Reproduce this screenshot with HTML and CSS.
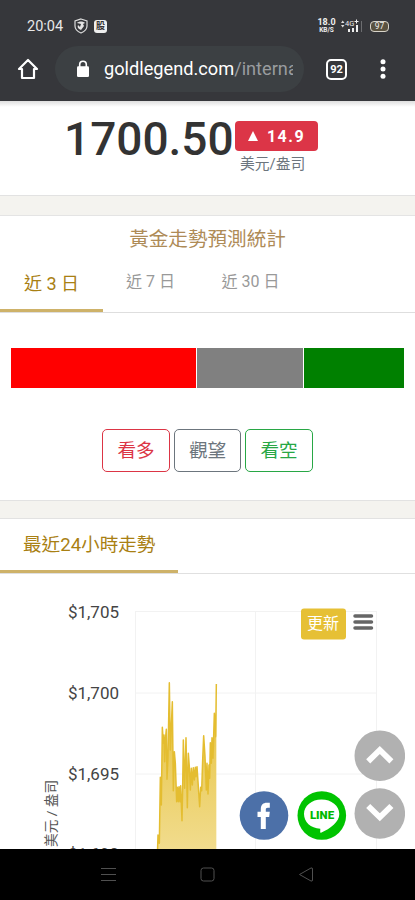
FILE: index.html
```html
<!DOCTYPE html>
<html lang="zh-Hant">
<head>
<meta charset="utf-8">
<meta name="viewport" content="width=device-width">
<title>黃金走勢</title>
<link rel="stylesheet" href="styles.css">
</head>
<body>
<div class="phone">
  <header class="browser">
    <div class="status">
      <span class="clock">20:04</span>
      <svg class="shield" width="14" height="16" viewBox="0 0 14 16"><path d="M7 1 13 3v5c0 3-2.500 5.500-6 7C3.500 13.500 1 11 1 8V3Z" fill="none" stroke="#ddd" stroke-width="1.200"/><path d="M3 5c2-2 6-2 8 0L9 6l1 2-3 4C4 11 3 9 4 7l2 2 1-3Z" fill="#e4e4e4"/></svg>
      <span class="stock">股</span>
      <span class="speed"><b>18.0</b><small>KB/S</small></span>
      <svg class="signal" width="24" height="16" viewBox="0 0 24 16"><path d="m1 5 1.700-2.500L4.500 5ZM1 7l1.700 2.500L4.500 7Z" fill="#ddd"/><text x="5" y="8">4G</text><path d="M14.500 3.500h4M16.500 1.500v4" stroke="#eee"/><path d="M8 11h2v3H8Zm4-1h2v4h-2Zm4-3h2v7h-2Z" fill="#eee"/><path d="M21.500 3v11" stroke="#6c6d70"/></svg>
      <span class="battery">97</span>
    </div>
    <div class="toolbar">
      <svg class="home" width="22" height="22" viewBox="0 0 22 22"><path d="M11 2 2 11h3v9h12v-9h3Z" fill="none" stroke="#fff" stroke-width="2.200" stroke-linejoin="round"/></svg>
      <div class="address">
        <svg width="14" height="18" viewBox="0 0 14 18"><path d="M3.700 7V4.500a3.300 3.300 0 0 1 6.600 0V7" fill="none" stroke="#fff" stroke-width="1.600"/><rect x="1" y="6.300" width="12" height="10.700" rx="1.300" fill="#fff"/></svg>
        <span class="url">goldlegend.com<i>/interna</i></span>
      </div>
      <span class="count">92</span>
      <svg class="more" width="6" height="20" viewBox="0 0 6 20" fill="#fff"><circle cx="3" cy="2.800" r="2.500"/><circle cx="3" cy="10" r="2.500"/><circle cx="3" cy="17.200" r="2.500"/></svg>
    </div>
  </header>

  <main class="page">
    <section class="card quote">
      <span class="price">1700.50</span>
      <div class="delta">
        <span class="badge"><svg width="10" height="10" viewBox="0 0 10 10"><path d="m5 0 5 10H0Z" fill="#fff"/></svg>14.9</span>
        <span class="unit">美元/盎司</span>
      </div>
    </section>

    <section class="card forecast">
      <h2>黃金走勢預測統計</h2>
      <nav class="tabs"><a class="tab active">近 3 日</a><a class="tab">近 7 日</a><a class="tab">近 30 日</a></nav>
      <div class="ratio"><span class="bull"></span><span class="hold"></span><span class="bear"></span></div>
      <div class="votes"><button class="red">看多</button><button class="gray">觀望</button><button class="green">看空</button></div>
    </section>

    <section class="card trend">
      <div class="trend-head"><span>最近24小時走勢</span></div>
      <svg class="chart" width="415" height="275" viewBox="0 574 415 275">
        <defs><linearGradient id="gold" gradientUnits="userSpaceOnUse" x1="0" y1="40" x2="0" y2="720"><stop offset="0" stop-color="#e6c035"/><stop offset="1" stop-color="#f5e6ae"/></linearGradient></defs>
        <path d="M135 611.500h241M135 693h241M135 774h241M135.500 611v238M255.500 611v238M376.500 611v238" stroke="#f2f2f2" fill="none"/>
        <g transform="translate(130 670) scale(.33333)">
          <path fill="url(#gold)" stroke="none" d="M82 560 84 495 88 520 91 322 94 405 97 172 100 220 102 195 104 275 106 210 109 178 111 328 114 260 118 38 121 240 127 95 130 362 133 245 136 280 140 395 142 352 145 395 147 350 150 395 152 347 156 452 158 350 160 210 164 355 168 203 172 413 175 250 178 290 181 360 184 295 187 345 190 293 193 330 196 292 198 320 201 290 205 350 209 410 212 352 215 362 218 270 221 197 225 260 229 360 231 280 234 372 237 285 239 325 241 218 244 280 246 203 249 265 253 130 257 200 259 42V560Z"/>
          <path fill="none" stroke="#e4bd30" stroke-width="4.500" stroke-linejoin="round" d="M82 560 84 495 88 520 91 322 94 405 97 172 100 220 102 195 104 275 106 210 109 178 111 328 114 260 118 38 121 240 127 95 130 362 133 245 136 280 140 395 142 352 145 395 147 350 150 395 152 347 156 452 158 350 160 210 164 355 168 203 172 413 175 250 178 290 181 360 184 295 187 345 190 293 193 330 196 292 198 320 201 290 205 350 209 410 212 352 215 362 218 270 221 197 225 260 229 360 231 280 234 372 237 285 239 325 241 218 244 280 246 203 249 265 253 130 257 200 259 42"/>
        </g>
        <g class="axis"><text x="119" y="617.500">$1,705</text><text x="119" y="698.500">$1,700</text><text x="119" y="779.500">$1,695</text><text x="119" y="859.500">$1,690</text></g>
        <text class="axis-title" transform="translate(56 847) rotate(-90)">美元 / 盎司</text>
        <rect x="301" y="608.500" width="45" height="31" rx="3" fill="#e6c035"/>
        <text class="refresh" x="323" y="628.500">更新</text>
        <path d="M355 616h16.500M355 622h16.500M355 628h16.500" stroke="#666" stroke-width="3.500" stroke-linecap="round"/>
      </svg>
    </section>

    <div class="floating">
      <svg width="166" height="112" viewBox="239 729 166 112">
        <circle cx="264" cy="815.500" r="24.300" fill="#4c70a8"/>
        <path d="M260.800 829v-12H257.500v-5.200h3.300v-2.500c0-4.500 2.500-6.500 6-6.500h3v5h-2c-1.500 0-2 .7-2 1.800v2.200h4l-.6 5.200h-3.400v12Z" fill="#fff"/>
        <circle cx="321.800" cy="815.500" r="24.300" fill="#00c300"/>
        <path d="M321.500 799.500c10 0 17.800 6.300 17.800 14.500 0 8-8.800 14.500-18.300 18.800-1.300.5-.6-2.200-.7-4-9.800-.5-16.300-7-16.300-14.800 0-8.200 7.700-14.500 17.500-14.500Z" fill="#fff"/>
        <text class="line" x="322" y="818.500">LINE</text>
        <circle cx="379.800" cy="755.700" r="25.300" fill="#b1b1b1"/>
        <path d="m368.200 761.300 11.600-11.300 11.600 11.300" fill="none" stroke="#fff" stroke-width="5.800"/>
        <circle cx="379.800" cy="813.500" r="25.300" fill="#b1b1b1"/>
        <path d="m368.200 806 11.600 11.300 11.600-11.300" fill="none" stroke="#fff" stroke-width="5.800"/>
      </svg>
    </div>
  </main>

  <footer class="system">
    <svg width="415" height="51" viewBox="0 849 415 51" fill="none" stroke="#505050"><path d="M101 868.500h15M101 874.500h15M101 880.500h15"/><rect x="201" y="868" width="13" height="13" rx="2.500"/><path d="M299.500 874.500 311 868q1.500-.5 1.500 1v11q0 1.500-1.500 1Z"/></svg>
  </footer>
</div>
</body>
</html>
```

FILE: styles.css
```css
* { box-sizing: border-box; }
body { margin: 0; background: #000; font-family: Roboto, "Noto Sans CJK TC", sans-serif; }
svg { display: block; flex: none; }
.phone { width: 415px; height: 900px; display: flex; flex-direction: column; overflow: hidden; }

.browser { height: 101px; background: #36373b; color: #fff; flex: none; }
.status { height: 46px; padding: 6px 26px 0 27px; display: flex; align-items: center; }
.clock { font-size: 14.5px; color: #e8e8e8; width: 47px; }
.shield { margin-top: -1px; }
.stock { width: 13px; height: 13px; margin-left: 6px; border-radius: 3px; background: #eee; color: #333; font-size: 9px; font-weight: 700; line-height: 12px; text-align: center; }
.speed { margin-left: auto; width: 19px; display: flex; flex-direction: column; align-items: center; color: #eee; }
.speed b { font-size: 9px; line-height: 9px; }
.speed small { font-size: 6.5px; font-weight: 700; line-height: 7px; }
.signal { margin: -1px 6px 0 4px; }
.signal text { font-size: 7.5px; fill: #e8e8e8; }
.battery { width: 19px; height: 11px; border: 1.5px solid #d8d4ca; border-radius: 4px; background: #5a5240; color: #eee; font-size: 8.5px; line-height: 8.5px; text-align: center; }
.toolbar { height: 46px; display: flex; align-items: center; padding-left: 17px; }
.address { width: 249px; height: 46px; margin-left: 16px; padding: 0 11px 0 21px; border-radius: 23px; background: #3c4043; display: flex; align-items: center; gap: 14px; }
.url { width: 189px; overflow: hidden; white-space: nowrap; font-size: 18.2px; line-height: 26px; }
.url i { font-style: normal; color: #999c9f; }
.count { width: 21px; height: 21px; margin-left: 22px; border: 2px solid #fff; border-radius: 5px; font-size: 11px; font-weight: 700; line-height: 17px; text-align: center; }
.more { margin-left: 33px; }

.page { height: 748px; flex: none; background: #f4f3ef; position: relative; display: flex; flex-direction: column; overflow: hidden; }
.card { background: #fff; flex: none; }
.quote { height: 95px; border-bottom: 1px solid #e2e2e2; display: flex; padding: 8px 0 0 64px; background: linear-gradient(#dedede, #fff 6px); }
.price { width: 171px; font-size: 46px; font-weight: 500; line-height: 60px; color: #333; }
.delta { padding-top: 12px; }
.badge { width: 83px; height: 30px; border-radius: 4px; background: #dc3547; color: #fff; display: flex; align-items: center; justify-content: center; gap: 9px; font-size: 16px; font-weight: 700; letter-spacing: 1.5px; }
.unit { display: block; margin-left: 5px; font-size: 14.8px; line-height: 26px; color: #6c757d; }

.forecast { height: 286px; margin-top: 19px; border-top: 1px solid #e4e4e4; border-bottom: 1px solid #e2e2e2; }
.forecast h2 { margin: 0; padding-top: 9px; height: 45px; font-size: 19.6px; line-height: 30px; font-weight: 400; text-align: center; color: #ae8b57; }
.tabs { height: 52px; display: flex; border-bottom: 1px solid #dedede; }
.tab { height: 52px; width: 95px; font-size: 16px; line-height: 42px; color: #999; text-align: center; white-space: nowrap; }
.tab:last-child { width: 105px; }
.tab.active { width: 103px; height: 51px; font-size: 18px; line-height: 46px; color: #a98013; border-bottom: 3px solid #ceb269; }
.ratio { margin: 35px 11px 0; height: 40px; display: flex; gap: 1px; }
.bull { width: 185px; background: red; }
.hold { width: 106px; background: gray; }
.bear { width: 100px; background: green; }
.votes { margin-top: 41px; display: flex; justify-content: center; gap: 4px; }
.votes button { width: 67.5px; height: 43px; padding: 0 0 4px; border: 1px solid; border-radius: 5px; background: none; font-family: inherit; font-size: 18.6px; }
.votes .red { color: #dc3545; }
.votes .gray { color: #6c757d; }
.votes .green { color: #28a745; }

.trend { height: 331px; margin-top: 17px; border-top: 1px solid #e2e2e2; }
.trend-head { height: 55px; border-bottom: 1px solid #e0e0e0; }
.trend-head span { display: block; width: 178px; height: 54px; padding-left: 23px; border-bottom: 3px solid #ceb269; color: #a98013; font-size: 18.6px; line-height: 52px; }
.axis { font-size: 17px; fill: #444; text-anchor: end; }
.axis-title { font-size: 13.7px; fill: #555; }
.refresh { font-size: 16px; fill: #fff; text-anchor: middle; }
.floating { position: absolute; left: 239px; top: 628px; }
.line { font-size: 11.5px; font-weight: 900; fill: #00b900; text-anchor: middle; }
.system { height: 51px; background: #000; flex: none; }
```
